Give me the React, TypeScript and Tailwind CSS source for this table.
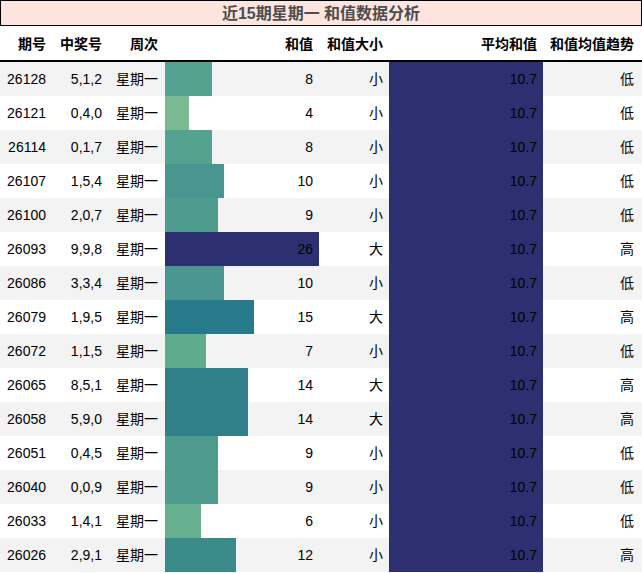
import React from "react";

/* ─── Data ───────────────────────────────────────────────── */
type Row = {
  issue: string;
  nums: string;
  day: string;
  sum: number;
  size: string;
  trend: string;
};

const ROWS: Row[] = [
  { issue: "26128", nums: "5,1,2", day: "星期一", sum: 8,  size: "小", trend: "低" },
  { issue: "26121", nums: "0,4,0", day: "星期一", sum: 4,  size: "小", trend: "低" },
  { issue: "26114", nums: "0,1,7", day: "星期一", sum: 8,  size: "小", trend: "低" },
  { issue: "26107", nums: "1,5,4", day: "星期一", sum: 10, size: "小", trend: "低" },
  { issue: "26100", nums: "2,0,7", day: "星期一", sum: 9,  size: "小", trend: "低" },
  { issue: "26093", nums: "9,9,8", day: "星期一", sum: 26, size: "大", trend: "高" },
  { issue: "26086", nums: "3,3,4", day: "星期一", sum: 10, size: "小", trend: "低" },
  { issue: "26079", nums: "1,9,5", day: "星期一", sum: 15, size: "大", trend: "高" },
  { issue: "26072", nums: "1,1,5", day: "星期一", sum: 7,  size: "小", trend: "低" },
  { issue: "26065", nums: "8,5,1", day: "星期一", sum: 14, size: "大", trend: "高" },
  { issue: "26058", nums: "5,9,0", day: "星期一", sum: 14, size: "大", trend: "高" },
  { issue: "26051", nums: "0,4,5", day: "星期一", sum: 9,  size: "小", trend: "低" },
  { issue: "26040", nums: "0,0,9", day: "星期一", sum: 9,  size: "小", trend: "低" },
  { issue: "26033", nums: "1,4,1", day: "星期一", sum: 6,  size: "小", trend: "低" },
  { issue: "26026", nums: "2,9,1", day: "星期一", sum: 12, size: "小", trend: "高" },
];

const AVG = 10.7;
const MAX = 26;

/* crest-like colour per sum value */
const BAR_COLOR: Record<number, string> = {
  4:  "#7bba91",
  6:  "#66b08f",
  7:  "#5fab8e",
  8:  "#54a290",
  9:  "#4f9c8f",
  10: "#48968f",
  12: "#3a8a8a",
  14: "#317f89",
  15: "#277a8a",
  26: "#2c3070",
};

function barBg(value: number, color: string, odd: boolean): string {
  const pct = (value / MAX) * 100;
  const rest = odd ? "#f3f3f3" : "#ffffff";
  return `linear-gradient(90deg, ${color} ${pct}%, ${rest} ${pct}%)`;
}

const COLS = "grid grid-cols-[53px_56px_56px_154px_70px_154px_99px]";
const FONT = "font-['Liberation_Sans','Noto_Sans_CJK_SC',sans-serif]";

/* ─── App ────────────────────────────────────────────────── */
export default function App() {
  return (
    <div className={`w-[642px] h-[573px] bg-white text-black ${FONT}`}>
      {/* Title */}
      <div className="h-[26px] border border-black bg-[#fde4df] text-center text-[16px] font-bold leading-[24px] pt-px text-[#4d4d4d]">
        近15期星期一 和值数据分析
      </div>

      {/* Header */}
      <div className={`${COLS} h-[36px] border-b-2 border-black text-[14px] font-bold items-end pb-[5px]`}>
        <div className="text-right pr-[7px]">期号</div>
        <div className="text-right pr-[7px]">中奖号</div>
        <div className="text-right pr-[7px]">周次</div>
        <div className="text-right pr-[6px]">和值</div>
        <div className="text-right pr-[6px]">和值大小</div>
        <div className="text-right pr-[6px]">平均和值</div>
        <div className="text-right pr-[8px]">和值均值趋势</div>
      </div>

      {/* Rows */}
      {ROWS.map((r, i) => {
        const odd = i % 2 === 0;
        return (
          <div
            key={r.issue}
            className={`${COLS} h-[34px] items-center text-[14px] ${odd ? "bg-[#f3f3f3]" : "bg-white"}`}
          >
            <div className="text-right pr-[7px]">{r.issue}</div>
            <div className="text-right pr-[7px]">{r.nums}</div>
            <div className="text-right pr-[7px]">{r.day}</div>
            <div
              className="h-full flex items-center justify-end pr-[6px]"
              style={{ background: barBg(r.sum, BAR_COLOR[r.sum], odd) }}
            >
              {r.sum}
            </div>
            <div className="text-right pr-[6px]">{r.size}</div>
            <div className="h-full flex items-center justify-end pr-[6px] bg-[#2c3070]">
              {AVG}
            </div>
            <div className="text-right pr-[8px]">{r.trend}</div>
          </div>
        );
      })}
    </div>
  );
}
